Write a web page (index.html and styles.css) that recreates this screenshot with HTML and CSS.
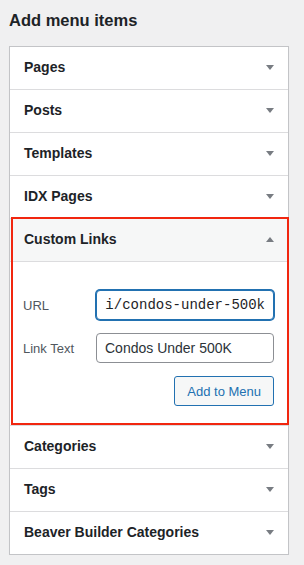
FILE: index.html
```html
<!DOCTYPE html>
<html lang="en">

<head>
  <meta charset="UTF-8">
  <meta name="viewport" content="width=device-width, initial-scale=1.0">
  <title>Add menu items</title>
  <link rel="stylesheet" href="styles.css">
</head>

<body>
  <h2 class="title">Add menu items</h2>

  <div class="accordion">
    <div class="section">
      <h3 class="section-title">Pages <span class="arrow"></span></h3>
    </div>
    <div class="section">
      <h3 class="section-title">Posts <span class="arrow"></span></h3>
    </div>
    <div class="section">
      <h3 class="section-title">Templates <span class="arrow"></span></h3>
    </div>
    <div class="section">
      <h3 class="section-title">IDX Pages <span class="arrow"></span></h3>
    </div>

    <!-- Open section, highlighted -->
    <div class="section open highlight">
      <h3 class="section-title">Custom Links <span class="arrow up"></span></h3>
      <div class="section-content">
        <div class="field">
          <label for="custom-url">URL</label>
          <input id="custom-url" class="code focus" type="text" value="https://example.com/i/condos-under-500k">
        </div>
        <div class="field">
          <label for="custom-text">Link Text</label>
          <input id="custom-text" type="text" value="Condos Under 500K">
        </div>
        <div class="actions">
          <button class="button">Add to Menu</button>
        </div>
      </div>
    </div>

    <div class="section">
      <h3 class="section-title">Categories <span class="arrow"></span></h3>
    </div>
    <div class="section">
      <h3 class="section-title">Tags <span class="arrow"></span></h3>
    </div>
    <div class="section last">
      <h3 class="section-title">Beaver Builder Categories <span class="arrow"></span></h3>
    </div>
  </div>
</body>

</html>
```

FILE: styles.css
```css
body {
  font-family: 'Liberation Sans', Arial, sans-serif;
  background-color: #f0f0f1;
  color: #1d2327;
  margin: 0;
  padding: 10px 15px 0 9px;
}

.title {
  font-size: 16.5px;
  font-weight: bold;
  line-height: 20px;
  margin: 0 0 16px 0;
}

.accordion {
  background-color: #fff;
  border: 1px solid #c3c4c7;
  box-shadow: 0 1px 1px rgba(0, 0, 0, 0.04);
}

.section {
  border-bottom: 1px solid #dcdcde;
}

.section.last {
  border-bottom: none;
}

.section-title {
  display: flex;
  justify-content: space-between;
  align-items: center;
  margin: 0;
  padding: 10px 14px 11px 14px;
  font-size: 14px;
  font-weight: bold;
  line-height: 21px;
  color: #1d2327;
}

/* Arrows */
.arrow {
  width: 0;
  height: 0;
  border-left: 4px solid transparent;
  border-right: 4px solid transparent;
  border-top: 5px solid #787c82;
}

.arrow.up {
  border-top: none;
  border-bottom: 5px solid #787c82;
}

.section.open .section-title {
  background-color: #f6f7f7;
  border-bottom: 1px solid #dcdcde;
}

.section.highlight {
  position: relative;
}

.section.highlight::after {
  content: '';
  position: absolute;
  top: -2px;
  left: 1px;
  right: -1px;
  bottom: 0;
  border: 2px solid #f1260f;
  pointer-events: none;
}

.section-content {
  padding: 28px 14px 19px 13px;
  display: flex;
  flex-direction: column;
  gap: 13px;
}

.field {
  display: grid;
  grid-template-columns: 73px 1fr;
  align-items: center;
}

.field label {
  font-size: 13px;
  color: #50575e;
}

.field input {
  box-sizing: border-box;
  width: 100%;
  height: 30px;
  margin: 0;
  padding: 0 8px;
  border: 1px solid #8c8f94;
  border-radius: 4px;
  font-family: 'Liberation Sans', Arial, sans-serif;
  font-size: 14px;
  color: #2c3338;
  background-color: #fff;
  outline: none;
}

.field input.code {
  font-family: 'Liberation Mono', 'DejaVu Sans Mono', monospace;
  color: #1d2327;
  direction: rtl;
}

.field input.focus {
  border-color: #2271b1;
  box-shadow: 0 0 0 1px #2271b1;
}

.actions {
  display: flex;
  justify-content: flex-end;
}

.button {
  height: 30px;
  padding: 0 12px;
  font-family: 'Liberation Sans', Arial, sans-serif;
  font-size: 13px;
  color: #2271b1;
  background-color: #f6f7f7;
  border: 1px solid #2271b1;
  border-radius: 3px;
  cursor: pointer;
}
```
